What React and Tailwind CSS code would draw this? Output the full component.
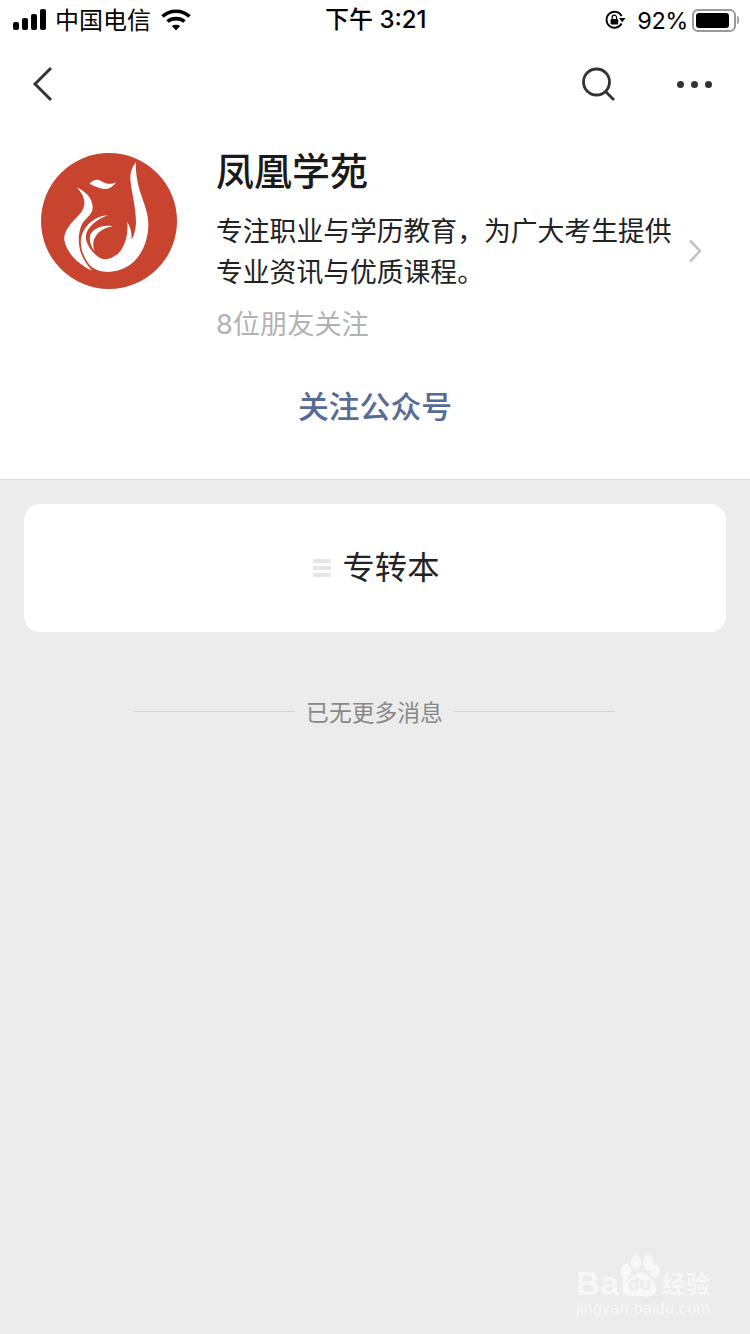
const cjk = { fontFamily: '"Inter", "Noto Sans CJK SC", sans-serif' };

function Signal() {
  return (
    <svg width="34" height="22" viewBox="0 0 34 22" fill="#000">
      <rect x="0" y="13" width="6" height="8" rx="2" />
      <rect x="9" y="9" width="6" height="12" rx="2" />
      <rect x="18" y="5" width="6" height="16" rx="2" />
      <rect x="27" y="0" width="6" height="21" rx="2" />
    </svg>
  );
}

function Wifi() {
  return (
    <svg width="30" height="22" viewBox="0 0 30 22" fill="none" stroke="#000" strokeWidth="3.6">
      <path d="M1.5 7.5 C9 0.5 21 0.5 28.5 7.5" />
      <path d="M6.5 12.5 C11 8.6 19 8.6 23.5 12.5" />
      <path d="M11 17 L15 21.5 L19 17 C16.5 15.2 13.5 15.2 11 17 Z" fill="#000" stroke="none" />
    </svg>
  );
}

function RotationLock() {
  return (
    <svg width="22" height="22" viewBox="0 0 22 22" fill="none">
      <path d="M17.6 14.5 A8 8 0 1 1 17.6 7" stroke="#000" strokeWidth="1.8" />
      <path d="M15 9 L21.5 9 L18.2 13.2 Z" fill="#000" />
      <rect x="6.6" y="10" width="7.6" height="5.6" rx="1" fill="#000" />
      <path d="M8.2 10.2 V8.4 A2.2 2.2 0 0 1 12.6 8.4 V10.2" stroke="#000" strokeWidth="1.2" />
    </svg>
  );
}

function Battery() {
  return (
    <div className="flex items-center">
      <div className="w-[44px] h-[23px] rounded-[6px] border-2 border-[#9a9a9a] p-[2px]">
        <div className="h-full w-[33px] rounded-[3px] bg-black" />
      </div>
      <div className="w-[2px] h-[8px] ml-[1px] rounded-r-sm bg-[#a8a8a8]" />
    </div>
  );
}

function PhoenixLogo() {
  return (
    <svg width="136" height="136" viewBox="33 39 408 408" className="shrink-0">
      <circle cx="237" cy="243" r="204" fill="#c8442f" />
      <g fill="#fff">
        <path d="M178 131 C188 122 200 116 212 122 C224 130 240 136 258 127 C250 140 236 149 222 147 C208 144 192 138 178 131 Z" />
        <path d="M140 142 C166 154 188 174 188 203 C188 220 172 232 160 246 C148 264 142 296 150 330 C156 352 170 374 186 392 C150 376 110 342 103 300 C100 272 124 250 146 226 C168 204 172 176 140 142 Z" />
        <path d="M318 67 C306 80 300 98 301 118 C304 156 318 200 318 250 C316 276 310 292 304 298 C306 280 302 262 292 246 C294 276 290 306 272 332 C256 352 228 366 206 352 C186 336 164 310 168 285 C172 262 200 238 233 226 C200 228 165 250 154 290 C148 320 160 350 178 374 C200 398 246 404 288 382 C332 358 355 306 355 252 C355 210 334 176 324 132 C320 110 316 88 318 67 Z" />
        <path d="M248 259 C222 254 196 262 182 282 C176 296 180 316 194 334 C186 312 190 296 202 282 C212 270 230 262 248 259 Z" />
      </g>
    </svg>
  );
}

function BaiduMark() {
  return (
    <div className="absolute left-[576px] top-[1253px] w-[136px] h-[66px] text-white/60" style={{ fontFamily: '"Liberation Sans", "Noto Sans CJK SC", sans-serif' }}>
      <div className="absolute left-0 top-[11px] text-[33px] leading-[40px] font-bold tracking-[1px]">Bai</div>
      <svg className="absolute left-[44px] top-0" width="60" height="46" viewBox="0 0 60 46" fill="currentColor">
        <ellipse cx="28" cy="10" rx="5" ry="8" />
        <ellipse cx="16" cy="9" rx="5" ry="7" />
        <ellipse cx="6" cy="18" rx="5.5" ry="7" />
        <ellipse cx="35" cy="18" rx="5" ry="7" />
        <path d="M21 20 C30 20 36 30 36 36 C36 44 27 44 21 43 C13 44 4 44 5 35 C6 28 13 20 21 20 Z" />
      </svg>
      <div className="absolute left-[52px] top-[21px] text-[19px] leading-[20px] font-bold text-[#ececec]">du</div>
      <div className="absolute left-[86px] top-[17px] text-[24px] leading-[30px] font-bold whitespace-nowrap">经验</div>
      <div className="absolute left-0 top-[46px] w-[136px] text-[16px] leading-[20px] tracking-[0.3px] whitespace-nowrap">jingyan.baidu.com</div>
    </div>
  );
}

export default function App() {
  return (
    <div className="relative w-[750px] h-[1334px] overflow-hidden bg-[#ececec] flex flex-col" style={cjk}>
      <header className="bg-white h-[480px] border-b border-[#dcdcdc] shrink-0 flex flex-col">
        {/* status bar */}
        <div className="relative h-[40px] flex items-center justify-between pl-[13px] pr-[11px] text-black text-[24px] leading-[40px]">
          <div className="flex items-center">
            <Signal />
            <span className="ml-[8px] translate-y-px">中国电信</span>
            <span className="ml-[10px] flex"><Wifi /></span>
          </div>
          <div className="absolute left-[325px] top-0 font-medium whitespace-nowrap">下午 3:21</div>
          <div className="flex items-center">
            <RotationLock />
            <span className="ml-[11px] text-[23.5px] tracking-[-0.4px] translate-y-px">92%</span>
            <span className="ml-[4px]"><Battery /></span>
          </div>
        </div>

        {/* navigation */}
        <div className="h-[88px] flex items-center justify-between pl-[33px] pr-[38px]">
          <svg width="20" height="36" viewBox="0 0 20 36" fill="none" stroke="#333" strokeWidth="3">
            <path d="M18 2 L2 18 L18 34" />
          </svg>
          <div className="flex items-center gap-[60px]">
            <svg width="36" height="36" viewBox="0 0 36 36" fill="none" stroke="#333" strokeWidth="2.8">
              <circle cx="15.5" cy="16" r="13" />
              <path d="M24.5 25.5 L33 34" />
            </svg>
            <div className="flex gap-[7px]">
              <span className="w-[7px] h-[7px] rounded-full bg-[#333]" />
              <span className="w-[7px] h-[7px] rounded-full bg-[#333]" />
              <span className="w-[7px] h-[7px] rounded-full bg-[#333]" />
            </div>
          </div>
        </div>

        {/* account profile */}
        <div className="flex pl-[41px] pr-[48px]">
          <div className="pt-[25px]"><PhoenixLogo /></div>
          <div className="ml-[39px] flex-1 min-w-0">
            <h1 className="text-[38px] leading-[46px] font-medium text-[#1a1a1a] mt-[20px] whitespace-nowrap">凤凰学苑</h1>
            <p className="text-[26.8px] leading-[41px] text-[#222] mt-[17px] whitespace-nowrap">
              专注职业与学历教育，为广大考生提供
              <br />
              专业资讯与优质课程。
            </p>
            <p className="text-[27.2px] leading-[40px] text-[#b2b2b2] mt-[12px] whitespace-nowrap">8位朋友关注</p>
          </div>
          <div className="flex items-start pt-[111px]">
            <svg width="14" height="24" viewBox="0 0 14 24" fill="none" stroke="#c4c4c4" strokeWidth="2.6">
              <path d="M2 1.5 L12 12 L2 22.5" />
            </svg>
          </div>
        </div>

        <div className="mt-[42px] text-center text-[30.8px] leading-[40px] font-medium text-[#576b95]">关注公众号</div>
      </header>

      {/* article card */}
      <div className="mx-[24px] mt-[24px] h-[128px] rounded-[16px] bg-white flex items-center justify-center">
        <div className="flex flex-col gap-[3px] mr-[12px] translate-x-px">
          <span className="w-[18px] h-[4px] bg-[#e6e6e6]" />
          <span className="w-[18px] h-[4px] bg-[#e6e6e6]" />
          <span className="w-[18px] h-[4px] bg-[#e6e6e6]" />
        </div>
        <span className="text-[32.3px] leading-[44px] text-[#222] translate-x-px">专转本</span>
      </div>

      {/* end of list */}
      <div className="mt-[64px] ml-[134px] w-[481px] flex items-center h-[34px]">
        <span className="flex-1 h-px bg-[#d4d4d4] mb-[4px]" />
        <span className="mx-[11px] text-[22.8px] leading-[34px] text-[#888]">已无更多消息</span>
        <span className="flex-1 h-px bg-[#d4d4d4] mb-[4px]" />
      </div>

      <BaiduMark />
    </div>
  );
}
